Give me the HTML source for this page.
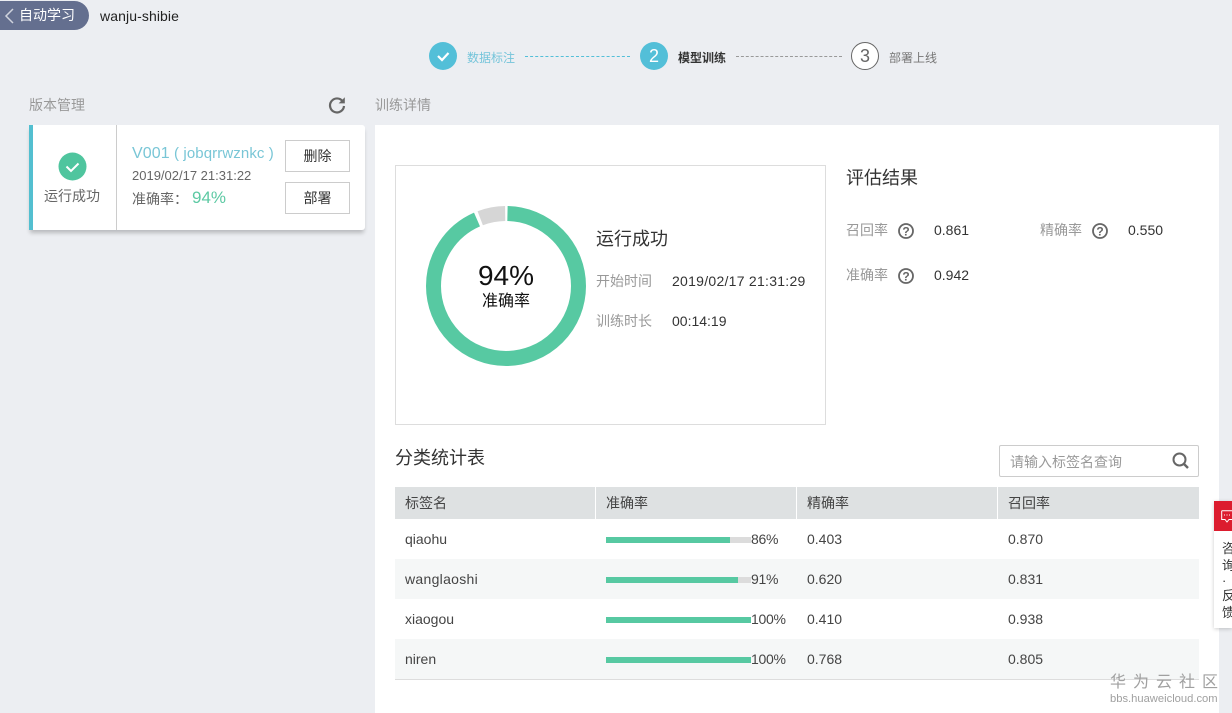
<!DOCTYPE html>
<html lang="zh"><head><meta charset="utf-8"><title>wanju-shibie</title>
<style>
*{box-sizing:border-box}
html,body{margin:0;padding:0}
body{width:1232px;height:713px;overflow:hidden;position:relative;background:#eceef2;font-family:"Liberation Sans","Noto Sans CJK SC",sans-serif;font-size:14px;color:#333}
.a{position:absolute;white-space:nowrap}
.g{color:#999}
.circ{position:absolute;width:28px;height:28px;border-radius:50%;background:#53bfd8;color:#fff;text-align:center;line-height:28px;font-size:18px;top:42px}
.dash{position:absolute;top:56px;height:0;border-top:1px dashed #53bfd8}
.btn{position:absolute;left:285px;width:65px;height:32px;border:1px solid #ccc;background:#fff;text-align:center;line-height:30px;font-size:14px;color:#333}
.th{position:absolute;top:487px;height:32px;background:#dee1e2;line-height:32px;padding-left:10px;color:#444;font-size:14px}
.row{position:absolute;left:395px;width:804px;height:40px}
.c{position:absolute;line-height:40px;font-size:14px;color:#444;white-space:nowrap}
.p{letter-spacing:-.3px}
.bar{position:absolute;left:606px;width:145px;height:6px;background:#dcdcdc}
.bar i{display:block;height:6px;background:#57c9a2}
.q{position:absolute}
</style></head><body>

<div class="a" style="left:0;top:1px;width:89px;height:29px;background:#646f8f;border-radius:0 15px 15px 0;color:#fff;line-height:29px;padding-left:19px;font-size:14px">自动学习</div>
<svg class="a" style="left:3px;top:8px" width="12" height="16"><path d="M10 1 L3 8 L10 15" fill="none" stroke="#cfd3dd" stroke-width="1.5"/></svg>
<div class="a" style="left:100px;top:7px;font-size:14px;color:#222;line-height:18px;letter-spacing:.1px">wanju-shibie</div>

<div class="circ" style="left:429px"><svg width="28" height="28" style="display:block"><path d="M9 14 L13 18 L19.5 11" fill="none" stroke="#fff" stroke-width="2.2"/></svg></div>
<div class="a" style="left:467px;top:49px;font-size:12px;line-height:18px;color:#74c4da">数据标注</div>
<div class="dash" style="left:525px;width:105px"></div>
<div class="circ" style="left:640px">2</div>
<div class="a" style="left:678px;top:49px;font-size:12px;line-height:18px;color:#333;font-weight:bold">模型训练</div>
<div class="dash" style="left:736px;width:106px;border-color:#999"></div>
<div class="circ" style="left:851px;background:#fff;border:1px solid #666;color:#666;line-height:26px">3</div>
<div class="a" style="left:889px;top:49px;font-size:12px;line-height:18px;color:#777">部署上线</div>

<div class="a g" style="left:29px;top:96px;font-size:14px;line-height:18px">版本管理</div>
<svg class="a" style="left:327px;top:95px" width="20" height="20" viewBox="0 0 20 20"><path d="M15.6 6.2 A7 7 0 1 0 17 11" fill="none" stroke="#666" stroke-width="2.2"/><path d="M17.8 2.2 V8.4 H11.6 Z" fill="#666"/></svg>
<div class="a g" style="left:375px;top:96px;font-size:14px;line-height:18px">训练详情</div>

<div class="a" style="left:29px;top:125px;width:336px;height:105px;background:#fff;border-left:4px solid #53bfd0;border-radius:0 3px 3px 0;box-shadow:0 4px 4px -1px rgba(0,0,0,.22)"></div>
<div class="a" style="left:116px;top:125px;width:1px;height:105px;background:#ccc"></div>
<svg class="a" style="left:58px;top:152px" width="29" height="29"><circle cx="14.5" cy="14.5" r="14" fill="#4fc59e"/><path d="M8.5 14.5 L13 19 L20.5 11.5" fill="none" stroke="#fff" stroke-width="2"/></svg>
<div class="a" style="left:44px;top:187px;font-size:14px;line-height:18px;color:#666">运行成功</div>
<div class="a" style="left:132px;top:144px;font-size:16px;line-height:20px;color:#79c6d6;letter-spacing:.1px">V001<span style="font-size:15px"> ( jobqrrwznkc )</span></div>
<div class="a" style="left:132px;top:167px;font-size:13px;line-height:17px;color:#666">2019/02/17 21:31:22</div>
<div class="a" style="left:132px;top:190px;font-size:14px;line-height:18px;color:#666">准确率：</div>
<div class="a" style="left:192px;top:187px;font-size:17px;line-height:22px;color:#5cc9a3">94%</div>
<div class="btn" style="top:140px">删除</div>
<div class="btn" style="top:182px">部署</div>

<div class="a" style="left:375px;top:125px;width:844px;height:588px;background:#fff"></div>

<div class="a" style="left:395px;top:165px;width:431px;height:260px;border:1px solid #ddd"></div>
<svg class="a" style="left:426px;top:206px" width="160" height="160" viewBox="0 0 160 160">
<circle cx="80" cy="80" r="72.5" fill="none" stroke="#57c9a2" stroke-width="15" stroke-dasharray="424 456" stroke-dashoffset="-1.5" transform="rotate(-90 80 80)"/>
<circle cx="80" cy="80" r="72.5" fill="none" stroke="#d6d6d6" stroke-width="15" stroke-dasharray="25.5 456" stroke-dashoffset="-429" transform="rotate(-90 80 80)"/>
</svg>
<div class="a" style="left:426px;top:260px;width:160px;text-align:center;font-size:28px;line-height:32px;color:#111">94%</div>
<div class="a" style="left:426px;top:292px;width:160px;text-align:center;font-size:16px;line-height:20px;color:#111">准确率</div>
<div class="a" style="left:596px;top:227px;font-size:18px;line-height:24px;color:#333">运行成功</div>
<div class="a g" style="left:596px;top:272px;line-height:18px">开始时间</div>
<div class="a" style="left:672px;top:272px;line-height:18px;font-size:14px;color:#333;letter-spacing:.27px">2019/02/17 21:31:29</div>
<div class="a g" style="left:596px;top:312px;line-height:18px">训练时长</div>
<div class="a" style="left:672px;top:312px;line-height:18px;font-size:14px;color:#333">00:14:19</div>

<div class="a" style="left:846px;top:166px;font-size:18px;line-height:24px;color:#333">评估结果</div>
<div class="a g" style="left:846px;top:221px;line-height:18px">召回率</div>
<svg class="q" style="left:898px;top:223px" width="16" height="16"><circle cx="8" cy="8" r="7" fill="none" stroke="#666" stroke-width="1.8"/><text x="8" y="12.5" text-anchor="middle" font-size="12" font-weight="bold" fill="#666" font-family="Liberation Sans">?</text></svg>
<div class="a" style="left:934px;top:221px;line-height:18px;color:#333">0.861</div>
<div class="a g" style="left:1040px;top:221px;line-height:18px">精确率</div>
<svg class="q" style="left:1092px;top:223px" width="16" height="16"><circle cx="8" cy="8" r="7" fill="none" stroke="#666" stroke-width="1.8"/><text x="8" y="12.5" text-anchor="middle" font-size="12" font-weight="bold" fill="#666" font-family="Liberation Sans">?</text></svg>
<div class="a" style="left:1128px;top:221px;line-height:18px;color:#333">0.550</div>
<div class="a g" style="left:846px;top:266px;line-height:18px">准确率</div>
<svg class="q" style="left:898px;top:268px" width="16" height="16"><circle cx="8" cy="8" r="7" fill="none" stroke="#666" stroke-width="1.8"/><text x="8" y="12.5" text-anchor="middle" font-size="12" font-weight="bold" fill="#666" font-family="Liberation Sans">?</text></svg>
<div class="a" style="left:934px;top:266px;line-height:18px;color:#333">0.942</div>

<div class="a" style="left:395px;top:446px;font-size:18px;line-height:24px;color:#333">分类统计表</div>
<div class="a" style="left:999px;top:445px;width:200px;height:32px;border:1px solid #ccc;border-radius:2px;background:#fff;line-height:32px;padding-left:10px;color:#999;font-size:14px">请输入标签名查询</div>
<svg class="a" style="left:1171px;top:451px" width="20" height="20"><circle cx="8.5" cy="8.5" r="6" fill="none" stroke="#666" stroke-width="2"/><path d="M13 13 L17 17" stroke="#666" stroke-width="2.4"/></svg>

<div class="th" style="left:395px;width:200px">标签名</div>
<div class="th" style="left:596px;width:200px">准确率</div>
<div class="th" style="left:797px;width:200px">精确率</div>
<div class="th" style="left:998px;width:201px">召回率</div>

<div class="row" style="top:559px;background:#f5f7f7"></div>
<div class="row" style="top:639px;height:41px;background:#f5f7f7;border-bottom:1px solid #ddd"></div>

<div class="c" style="left:405px;top:519px">qiaohu</div>
<div class="bar" style="top:537px"><i style="width:124px"></i></div>
<div class="c p" style="left:751px;top:519px">86%</div>
<div class="c" style="left:807px;top:519px">0.403</div>
<div class="c" style="left:1008px;top:519px">0.870</div>

<div class="c" style="left:405px;top:559px;letter-spacing:.3px">wanglaoshi</div>
<div class="bar" style="top:577px"><i style="width:132px"></i></div>
<div class="c p" style="left:751px;top:559px">91%</div>
<div class="c" style="left:807px;top:559px">0.620</div>
<div class="c" style="left:1008px;top:559px">0.831</div>

<div class="c" style="left:405px;top:599px">xiaogou</div>
<div class="bar" style="top:617px"><i style="width:145px"></i></div>
<div class="c p" style="left:751px;top:599px">100%</div>
<div class="c" style="left:807px;top:599px">0.410</div>
<div class="c" style="left:1008px;top:599px">0.938</div>

<div class="c" style="left:405px;top:639px">niren</div>
<div class="bar" style="top:657px"><i style="width:145px"></i></div>
<div class="c p" style="left:751px;top:639px">100%</div>
<div class="c" style="left:807px;top:639px">0.768</div>
<div class="c" style="left:1008px;top:639px">0.805</div>

<div class="a" style="left:1214px;top:501px;width:18px;height:127px;background:#fff;box-shadow:0 1px 4px rgba(0,0,0,.2)"></div>
<div class="a" style="left:1214px;top:501px;width:18px;height:30px;background:#dc1c2e"></div>
<svg class="a" style="left:1221px;top:510px" width="11" height="14"><path d="M.7.7 H11 M.7.7 V9.5 H4 L6 12 L8 9.5 H11" fill="none" stroke="#fff" stroke-width="1"/><path d="M3 5 H4 M5.5 5 H6.5 M8 5 H9" stroke="#fff"/></svg>
<div class="a" style="left:1222px;top:541px;width:10px;overflow:hidden;font-size:13px;line-height:16.5px;color:#333;white-space:normal;word-break:break-all"><span style="display:block;width:14px">咨</span><span style="display:block;width:14px">询</span><span style="display:block;width:14px;line-height:14px">·</span><span style="display:block;width:14px">反</span><span style="display:block;width:14px">馈</span></div>

<div class="a" style="left:1110px;top:673px;font-size:16px;line-height:20px;letter-spacing:7px;color:#a0a0a0">华为云社区</div>
<div class="a" style="left:1110px;top:692px;font-size:11.2px;line-height:14px;color:#a0a0a0">bbs.huaweicloud.com</div>
</body></html>
